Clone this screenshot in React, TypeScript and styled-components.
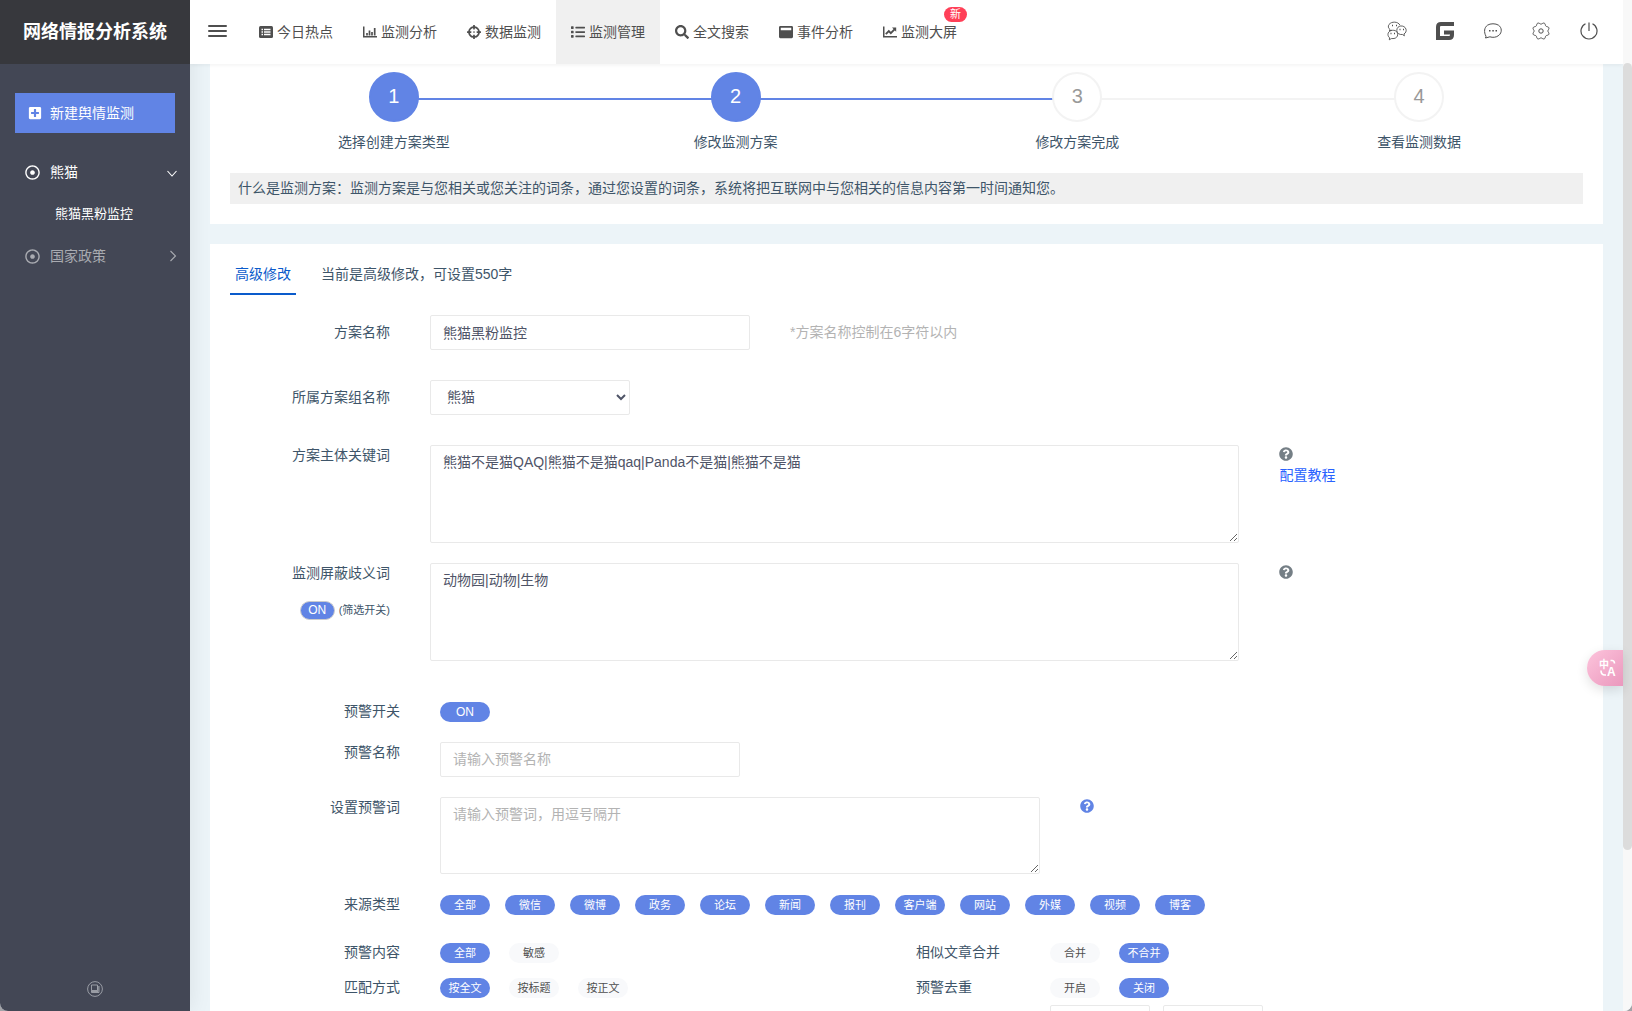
import React, { useState } from "react";
import styled, { createGlobalStyle } from "styled-components";
import {
  FaCrosshairs,
  FaList,
  FaPlusSquare,
  FaQuestionCircle,
  FaRegDotCircle,
  FaSearch,
  FaWindowMaximize,
} from "react-icons/fa";

const BLUE = "#6184e5";
const INK = "#3e5569";

const GlobalStyle = createGlobalStyle`
  *, *::before, *::after { box-sizing: border-box; }
  html, body, #root { height: 100%; }
  body {
    margin: 0;
    overflow: hidden;
    background: #a2a3a8;
    color: ${INK};
    font: 14px/20px "Liberation Sans", "Noto Sans CJK SC", sans-serif;
  }
  button, input, select, textarea { font: inherit; color: inherit; }
  button { border: 0; padding: 0; background: none; cursor: pointer; }
  a { text-decoration: none; }
  svg { display: block; flex: none; }
`;

const Shell = styled.div`
  display: grid;
  grid-template-columns: 190px minmax(0, 1fr) 9px;
  height: 100vh;
  overflow: hidden;
  border-radius: 0 0 8px 8px;
  background: #ecf4f8;
`;

const Sidebar = styled.aside`
  position: relative;
  z-index: 1;
  display: flex;
  flex-direction: column;
  background: #434755;
  box-shadow: 1px 0 20px rgba(0, 0, 0, 0.08);
`;

const Brand = styled.h1`
  display: flex;
  align-items: center;
  justify-content: center;
  height: 64px;
  margin: 0;
  background: #37383d;
  color: #fff;
  font-size: 18px;
  font-weight: 700;
`;

const CreateButton = styled.button`
  display: flex;
  align-items: center;
  gap: 8px;
  height: 40px;
  margin: 29px 15px 20px;
  padding: 0 13px;
  background: ${BLUE};
  color: #fff;
`;

const Menu = styled.nav`
  display: flex;
  flex-direction: column;
`;

const MenuItem = styled.a<{ $dim?: boolean }>`
  display: flex;
  align-items: center;
  gap: 10px;
  height: 38px;
  padding: 0 12px 0 25px;
  color: ${(p) => (p.$dim ? "#a9abb1" : "#fff")};
`;

const MenuText = styled.span`
  flex: 1;
`;

const SubItem = styled.a`
  height: 46px;
  padding-left: 55px;
  color: #fff;
  font-size: 13px;
  line-height: 46px;
`;

const SidebarFoot = styled.button`
  display: flex;
  justify-content: center;
  margin-top: auto;
  padding: 14px 0;
  color: #a3a6ae;
`;

const Main = styled.div`
  display: flex;
  flex-direction: column;
  min-width: 0;
  overflow: hidden;
`;

const Header = styled.header`
  position: relative;
  z-index: 2;
  display: flex;
  align-items: center;
  flex: none;
  height: 64px;
  padding: 0 10px 0 18px;
  background: #fff;
  color: #4f4f4f;
  box-shadow: 0 1px 4px rgba(0, 0, 0, 0.06);
`;

const MenuToggle = styled.button`
  display: flex;
  margin-right: 16px;
`;

const TopNav = styled.nav`
  display: flex;
  flex: 1;
  height: 100%;
`;

const TopLink = styled.a<{ $active?: boolean }>`
  position: relative;
  display: flex;
  align-items: center;
  gap: 4px;
  padding: 0 15px;
  background: ${(p) => (p.$active ? "#f0f0f0" : "transparent")};
  color: #4f4f4f;
  white-space: nowrap;
`;

const NewBadge = styled.span`
  position: absolute;
  top: 7px;
  right: 5px;
  padding: 0 6px;
  border-radius: 8px;
  background: #ff4058;
  color: #fff;
  font-size: 11px;
  line-height: 15px;
`;

const Tools = styled.div`
  display: flex;
`;

const ToolButton = styled.button`
  display: flex;
  align-items: center;
  justify-content: center;
  width: 48px;
  height: 64px;
  padding-bottom: 2px;
`;

const Content = styled.main`
  display: flex;
  flex-direction: column;
  gap: 20px;
  padding: 0 20px;
`;

const StepCard = styled.section`
  padding: 8px 20px 20px;
  background: #fff;
`;

const Steps = styled.ol`
  display: grid;
  grid-template-columns: repeat(4, 1fr);
  margin: 0 -7px;
  padding: 0;
  list-style: none;
`;

const Step = styled.li<{ $line?: string }>`
  position: relative;
  display: flex;
  flex-direction: column;
  align-items: center;
  gap: 10px;

  &::after {
    content: "";
    display: ${(p) => (p.$line ? "block" : "none")};
    position: absolute;
    top: 26px;
    left: 50%;
    width: 100%;
    height: 2px;
    background: ${(p) => p.$line};
  }
`;

const StepNumber = styled.span<{ $done?: boolean }>`
  position: relative;
  z-index: 1;
  width: 50px;
  height: 50px;
  border: 2px solid ${(p) => (p.$done ? BLUE : "#f3f3f3")};
  border-radius: 50%;
  background: ${(p) => (p.$done ? BLUE : "#fff")};
  color: ${(p) => (p.$done ? "#fff" : "#999")};
  font-size: 20px;
  line-height: 44px;
  text-align: center;
`;

const Note = styled.p`
  margin: 21px 0 0;
  padding: 5px 8px 6px;
  background: #f0f0f0;
`;

const FormCard = styled.section`
  padding: 15px 20px 40px;
  background: #fff;
`;

const TabBar = styled.div`
  display: flex;
  align-items: flex-start;
  gap: 25px;
  margin-bottom: 20px;
  line-height: 30px;
`;

const Tab = styled.button`
  height: 36px;
  padding: 0 5px 4px;
  border-bottom: 2px solid #0a5bcb;
  color: #0a5bcb;
`;

const Row = styled.div<{ $space: number }>`
  display: grid;
  grid-template-columns: 160px minmax(0, 8fr) minmax(0, 3fr);
  column-gap: 40px;
  margin-bottom: ${(p) => p.$space}px;
`;

const LabelCell = styled.div<{ $top?: number }>`
  display: flex;
  flex-direction: column;
  align-items: flex-end;
  gap: 17px;
  padding-top: ${(p) => p.$top ?? 0}px;
`;

const FieldLine = styled.div`
  display: flex;
  align-items: flex-start;
  gap: 40px;
`;

const fieldBox = `
  border: 1px solid #e9e9e9;
  border-radius: 2px;
  background: #fff;
  color: #4f5467;
  outline: none;
`;

const TextInput = styled.input<{ $width: number }>`
  ${fieldBox}
  width: ${(p) => p.$width}px;
  height: 35px;
  padding: 0 12px 2px;
  &::placeholder { color: #b3b3b3; opacity: 1; }
`;

const Select = styled.select`
  ${fieldBox}
  width: 200px;
  height: 35px;
  padding: 0 0 2px 12px;
`;

const TextArea = styled.textarea<{ $height: number; $width?: string }>`
  ${fieldBox}
  display: block;
  flex: none;
  width: ${(p) => p.$width ?? "100%"};
  height: ${(p) => p.$height}px;
  padding: 6px 12px;
  resize: both;
  &::placeholder { color: #b3b3b3; opacity: 1; }
`;

const Hint = styled.span`
  color: #b3b3b3;
  line-height: 34px;
`;

const HelpCell = styled.div`
  display: flex;
  flex-direction: column;
  align-items: flex-start;
  gap: 4px;
  padding-top: 2px;
`;

const HelpButton = styled.button<{ $blue?: boolean }>`
  color: ${(p) => (p.$blue ? BLUE : "#757f86")};
`;

const GuideLink = styled.a`
  color: #2962ff;
`;

const FilterSwitch = styled.div`
  display: flex;
  align-items: center;
  gap: 4px;
  font-size: 11px;
`;

const SmallSwitch = styled.button`
  width: 35px;
  height: 19px;
  border: 1px solid #ccc;
  border-radius: 10px;
  background: ${BLUE};
  color: #fff;
  font-size: 12px;
  line-height: 17px;
`;

const AlertRow = styled.div<{ $space: number }>`
  display: grid;
  grid-template-columns: 170px minmax(0, 1fr);
  column-gap: 40px;
  margin-bottom: ${(p) => p.$space}px;
`;

const AlertLabel = styled.label`
  text-align: right;
`;

const Pill = styled.button<{ $on?: boolean; $big?: boolean }>`
  width: 50px;
  height: 20px;
  border-radius: 10px;
  background: ${(p) => (p.$on ? BLUE : "#f8f9fb")};
  color: ${(p) => (p.$on ? "#fff" : "#4f4f4f")};
  font-size: ${(p) => (p.$big ? 12 : 11)}px;
  line-height: 20px;
`;

const PillRow = styled.div<{ $gap: number }>`
  display: flex;
  flex-wrap: wrap;
  gap: ${(p) => p.$gap}px;
  padding-top: 1px;
`;

const SplitRow = styled.div`
  display: grid;
  grid-template-columns: 170px 436px 94px minmax(0, 1fr);
  column-gap: 40px;
  margin-bottom: 14px;
`;

const RangeInputs = styled.div`
  display: flex;
  gap: 13px;
  margin: -7px 0 0 820px;
`;

const ScrollTrack = styled.div`
  padding-top: 63px;
  background: #f8f8f8;
`;

const ScrollThumb = styled.div`
  height: 83%;
  border-radius: 5px;
  background: #dcdcdc;
`;

const TranslateButton = styled.button`
  position: absolute;
  z-index: 3;
  top: 650px;
  right: 9px;
  display: flex;
  align-items: center;
  width: 36px;
  height: 36px;
  padding-left: 11px;
  border-radius: 18px 0 0 18px;
  background: linear-gradient(135deg, #fdc4dc, #ea98bd);
  box-shadow: 0 4px 12px rgba(0, 0, 0, 0.12);
  color: #fff;
`;

const TranslateDrawing = styled.svg`
  overflow: visible;
`;

const HamburgerIcon = () => (
  <svg width="20" height="14" viewBox="0 0 20 14" fill="none" stroke="currentColor" strokeWidth="2" strokeLinecap="round">
    <path d="M1 1h17M1 6h17M1 11h17" />
  </svg>
);

const ListCardIcon = () => (
  <svg width="14" height="14" viewBox="0 0 14 14">
    <rect y="1" width="14" height="12" rx="1.500" fill="currentColor" />
    <path d="M2.500 4.500H4M5 4.500h6.500M2.500 7H4M5 7h6.500M2.500 9.500H4M5 9.500h6.500" stroke="#fff" strokeWidth="1.300" />
  </svg>
);

const BarChartIcon = () => (
  <svg width="14" height="14" viewBox="0 0 14 14" fill="none" stroke="currentColor" strokeWidth="1.500">
    <path d="M.75 1.500v10.250H14" />
    <path d="M4 10.500V8M6.500 10.500V5.500M9 10.500V7M11.700 10.500V3" strokeWidth="1.700" />
  </svg>
);

const LineChartIcon = () => (
  <svg width="14" height="14" viewBox="0 0 14 14" fill="none" stroke="currentColor" strokeWidth="1.500">
    <path d="M.75 1.500v10.250H14" />
    <path d="M2.800 9.200l3-3 2 2 4-4" strokeWidth="1.900" />
    <path d="M9 2.500h4.200v4.200z" fill="currentColor" stroke="none" />
  </svg>
);

const Chevron = ({ down }: { down?: boolean }) => (
  <svg width="12" height="12" viewBox="0 0 12 12" fill="none" stroke="currentColor" strokeWidth="1.100">
    <path d={down ? "M1.500 5l4.500 5 4.500-5" : "M4.500 1l5 5-5 5"} />
  </svg>
);

const WechatGroupIcon = () => (
  <svg width="20" height="20" viewBox="0 0 20 20" fill="none" stroke="currentColor" strokeWidth="0.9">
    <path d="M3 8.500C1.200 7.300.8 5.200 2 3.500 4.500.2 11 .3 13 4.200M3 8.500l-.6 1.600 2-1" />
    <path d="M9.800 9.600C9.500 4 17.500 3.400 19 8.200c.6 2.100-.4 3.900-2 4.700l.4 1.900-2-1.300c-2.900.4-5.400-1.200-5.600-3.900z" />
    <path d="M5.500 9.300c6.200-.6 7 7.400 1.500 8.200l-2.700.1-2 1.200.3-2C-.4 14.300.8 9.600 5.500 9.300z" />
    <path d="M5 4.500h1M9 4.500h1M12.500 8.500h1M16 8.500h1M3.500 12.500h1M7 12.500h1" strokeWidth="1.300" />
  </svg>
);

const BrandMark = () => (
  <svg width="18" height="18" viewBox="0 0 18 18" fill="none" stroke="currentColor" strokeWidth="4">
    <path d="M18 2H5Q2 2 2 5v11h11q3 0 3-3v-2.500H8" />
  </svg>
);

const ChatIcon = () => (
  <svg width="18" height="18" viewBox="0 0 18 18" fill="none" stroke="currentColor">
    <path d="M2 14.300C-.3 10 .2 5.500 3.500 3.200c2.700-1.900 8.300-1.900 11 0 3.500 2.400 3.700 7.300.4 10.100-2.600 2.300-6.300 2.400-9 1.500L1.500 16z" />
    <path d="M5 8.700h1.500M8.300 8.700h1.500M11.500 8.700H13" strokeWidth="1.500" />
  </svg>
);

/* A closed wavy ring: eight lobes around the hub. */
const gearOutline = Array.from({ length: 96 }, (_, i) => {
  const angle = (i / 96) * Math.PI * 2;
  const radius = 7.7 + 0.8 * Math.cos(8 * angle + Math.PI);
  return `${(9 + radius * Math.cos(angle)).toFixed(2)},${(9 + radius * Math.sin(angle)).toFixed(2)}`;
}).join(" ");

const GearIcon = () => (
  <svg width="18" height="18" viewBox="0 0 18 18" fill="none" stroke="currentColor">
    <polygon points={gearOutline} />
    <circle cx="9" cy="9" r="2.200" />
  </svg>
);

const PowerIcon = () => (
  <svg width="18" height="18" viewBox="0 0 18 18" fill="none" stroke="currentColor" strokeWidth="1.200">
    <path d="M5.500 1.800a8 8 0 1 0 7 0M9 .5V9" />
  </svg>
);

const PagesIcon = () => (
  <svg width="16" height="16" viewBox="0 0 16 16" fill="none" stroke="currentColor" strokeWidth="0.9">
    <circle cx="8" cy="8" r="7.400" />
    <path d="M4.500 4h6v5.500h-6zM4.500 9.500v2h7.500V5M4.500 10.500H11V5" />
  </svg>
);

const TranslateIcon = () => (
  <TranslateDrawing width="20" height="20" viewBox="0 0 20 20" fill="none" stroke="currentColor" strokeWidth="1.600">
    <g fill="currentColor" stroke="none" fontWeight="700">
      <text x="1" y="10" fontSize="10">中</text>
      <text x="9" y="18" fontSize="12">A</text>
    </g>
    <path d="M12.500 2.500h1.500q2.500 0 2.500 3M3 12.500q0 4.500 4 4.500h1" />
  </TranslateDrawing>
);

const topLinks = [
  { text: "今日热点", icon: <ListCardIcon /> },
  { text: "监测分析", icon: <BarChartIcon /> },
  { text: "数据监测", icon: <FaCrosshairs size={14} /> },
  { text: "监测管理", icon: <FaList size={14} />, active: true },
  { text: "全文搜索", icon: <FaSearch size={14} /> },
  { text: "事件分析", icon: <FaWindowMaximize size={14} /> },
  { text: "监测大屏", icon: <LineChartIcon />, isNew: true },
];

const tools = [
  { name: "微信群", icon: <WechatGroupIcon /> },
  { name: "主页", icon: <BrandMark /> },
  { name: "消息", icon: <ChatIcon /> },
  { name: "设置", icon: <GearIcon /> },
  { name: "退出", icon: <PowerIcon /> },
];

const steps = [
  { text: "选择创建方案类型", done: true, line: BLUE },
  { text: "修改监测方案", done: true, line: BLUE },
  { text: "修改方案完成", line: "#f3f3f3" },
  { text: "查看监测数据" },
];

const sources = ["全部", "微信", "微博", "政务", "论坛", "新闻", "报刊", "客户端", "网站", "外媒", "视频", "博客"];

function Choice({ options, initial }: { options: string[]; initial: string }) {
  const [value, setValue] = useState(initial);
  return (
    <PillRow $gap={19}>
      {options.map((option) => (
        <Pill key={option} type="button" $on={option === value} aria-pressed={option === value} onClick={() => setValue(option)}>
          {option}
        </Pill>
      ))}
    </PillRow>
  );
}

function SourcePicker() {
  const [picked, setPicked] = useState(sources);
  const toggle = (name: string) =>
    setPicked((now) => (now.includes(name) ? now.filter((item) => item !== name) : [...now, name]));
  return (
    <PillRow $gap={15}>
      {sources.map((name) => (
        <Pill key={name} type="button" $on={picked.includes(name)} aria-pressed={picked.includes(name)} onClick={() => toggle(name)}>
          {name}
        </Pill>
      ))}
    </PillRow>
  );
}

export default function App() {
  return (
    <>
      <GlobalStyle />
      <Shell>
        <Sidebar>
          <Brand>网络情报分析系统</Brand>
          <CreateButton type="button">
            <FaPlusSquare size={14} />
            新建舆情监测
          </CreateButton>
          <Menu>
            <MenuItem href="#panda">
              <FaRegDotCircle size={15} />
              <MenuText>熊猫</MenuText>
              <Chevron down />
            </MenuItem>
            <SubItem href="#panda-monitor">熊猫黑粉监控</SubItem>
            <MenuItem href="#policy" $dim>
              <FaRegDotCircle size={15} />
              <MenuText>国家政策</MenuText>
              <Chevron />
            </MenuItem>
          </Menu>
          <SidebarFoot type="button" aria-label="页面">
            <PagesIcon />
          </SidebarFoot>
        </Sidebar>

        <Main>
          <Header>
            <MenuToggle type="button" aria-label="菜单">
              <HamburgerIcon />
            </MenuToggle>
            <TopNav>
              {topLinks.map((link) => (
                <TopLink key={link.text} href="#" $active={link.active}>
                  {link.icon}
                  {link.text}
                  {link.isNew && <NewBadge>新</NewBadge>}
                </TopLink>
              ))}
            </TopNav>
            <Tools>
              {tools.map((tool) => (
                <ToolButton key={tool.name} type="button" aria-label={tool.name}>
                  {tool.icon}
                </ToolButton>
              ))}
            </Tools>
          </Header>

          <Content>
            <StepCard>
              <Steps>
                {steps.map((step, index) => (
                  <Step key={step.text} $line={step.line}>
                    <StepNumber $done={step.done}>{index + 1}</StepNumber>
                    {step.text}
                  </Step>
                ))}
              </Steps>
              <Note>
                什么是监测方案：监测方案是与您相关或您关注的词条，通过您设置的词条，系统将把互联网中与您相关的信息内容第一时间通知您。
              </Note>
            </StepCard>

            <FormCard>
              <TabBar>
                <Tab type="button">高级修改</Tab>
                <span>当前是高级修改，可设置550字</span>
              </TabBar>

              <Row $space={30}>
                <LabelCell $top={7}>
                  <label htmlFor="plan-name">方案名称</label>
                </LabelCell>
                <FieldLine>
                  <TextInput id="plan-name" $width={320} defaultValue="熊猫黑粉监控" />
                  <Hint>*方案名称控制在6字符以内</Hint>
                </FieldLine>
              </Row>

              <Row $space={30}>
                <LabelCell $top={7}>
                  <label htmlFor="plan-group">所属方案组名称</label>
                </LabelCell>
                <FieldLine>
                  <Select id="plan-group" defaultValue="熊猫">
                    <option>熊猫</option>
                    <option>国家政策</option>
                  </Select>
                </FieldLine>
              </Row>

              <Row $space={20}>
                <LabelCell>
                  <label htmlFor="keywords">方案主体关键词</label>
                </LabelCell>
                <TextArea id="keywords" $height={98} defaultValue="熊猫不是猫QAQ|熊猫不是猫qaq|Panda不是猫|熊猫不是猫" />
                <HelpCell>
                  <HelpButton type="button" aria-label="关键词帮助">
                    <FaQuestionCircle size={14} />
                  </HelpButton>
                  <GuideLink href="#guide">配置教程</GuideLink>
                </HelpCell>
              </Row>

              <Row $space={40}>
                <LabelCell>
                  <label htmlFor="excluded">监测屏蔽歧义词</label>
                  <FilterSwitch>
                    <SmallSwitch type="button">ON</SmallSwitch>
                    (筛选开关)
                  </FilterSwitch>
                </LabelCell>
                <TextArea id="excluded" $height={98} defaultValue="动物园|动物|生物" />
                <HelpCell>
                  <HelpButton type="button" aria-label="歧义词帮助">
                    <FaQuestionCircle size={14} />
                  </HelpButton>
                </HelpCell>
              </Row>

              <AlertRow $space={20}>
                <AlertLabel htmlFor="alert-switch">预警开关</AlertLabel>
                <PillRow $gap={15}>
                  <Pill id="alert-switch" type="button" $on $big>
                    ON
                  </Pill>
                </PillRow>
              </AlertRow>

              <AlertRow $space={20}>
                <AlertLabel htmlFor="alert-name">预警名称</AlertLabel>
                <TextInput id="alert-name" $width={300} placeholder="请输入预警名称" />
              </AlertRow>

              <AlertRow $space={20}>
                <AlertLabel htmlFor="alert-words">设置预警词</AlertLabel>
                <FieldLine>
                  <TextArea id="alert-words" $height={77} $width="600px" placeholder="请输入预警词，用逗号隔开" />
                  <HelpCell>
                    <HelpButton type="button" $blue aria-label="预警词帮助">
                      <FaQuestionCircle size={14} />
                    </HelpButton>
                  </HelpCell>
                </FieldLine>
              </AlertRow>

              <AlertRow $space={27}>
                <AlertLabel as="span">来源类型</AlertLabel>
                <SourcePicker />
              </AlertRow>

              <SplitRow>
                <AlertLabel as="span">预警内容</AlertLabel>
                <Choice options={["全部", "敏感"]} initial="全部" />
                <span>相似文章合并</span>
                <Choice options={["合并", "不合并"]} initial="不合并" />
              </SplitRow>
              <SplitRow>
                <AlertLabel as="span">匹配方式</AlertLabel>
                <Choice options={["按全文", "按标题", "按正文"]} initial="按全文" />
                <span>预警去重</span>
                <Choice options={["开启", "关闭"]} initial="关闭" />
              </SplitRow>
              <RangeInputs>
                <TextInput $width={100} aria-label="开始时间" />
                <TextInput $width={100} aria-label="结束时间" />
              </RangeInputs>
            </FormCard>
          </Content>
        </Main>

        <ScrollTrack aria-hidden="true">
          <ScrollThumb />
        </ScrollTrack>
        <TranslateButton type="button" aria-label="翻译">
          <TranslateIcon />
        </TranslateButton>
      </Shell>
    </>
  );
}
